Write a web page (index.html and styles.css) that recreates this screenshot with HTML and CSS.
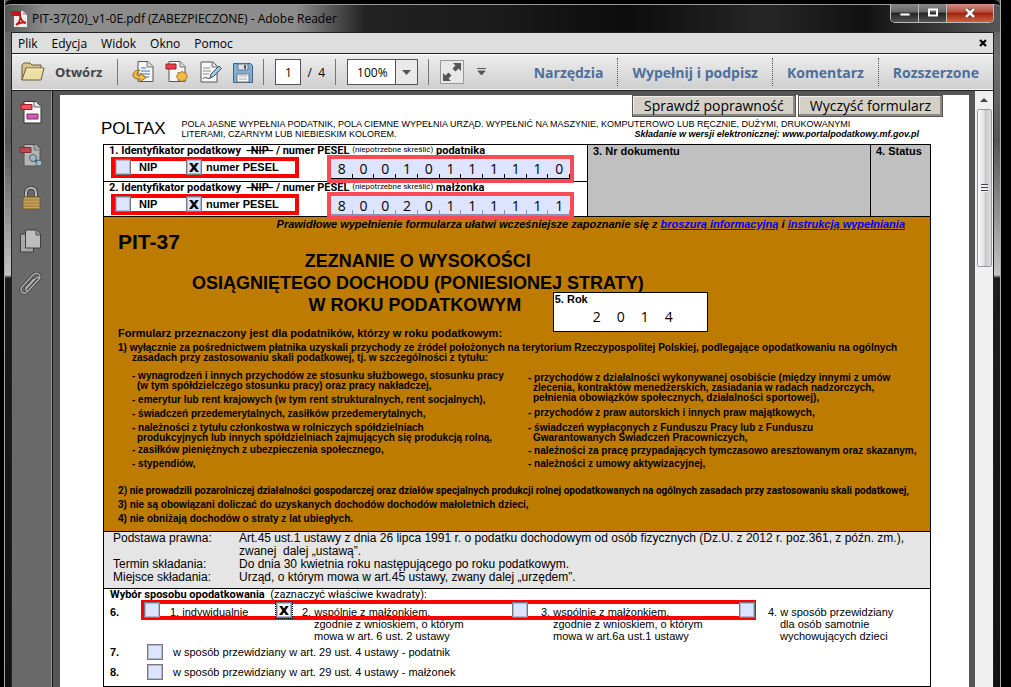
FILE: index.html
```html
<!DOCTYPE html>
<html lang="pl">
<head>
<meta charset="utf-8">
<title>PIT-37(20)_v1-0E.pdf (ZABEZPIECZONE) - Adobe Reader</title>
<link rel="stylesheet" href="styles.css">
</head>
<body>
<div class="window">
  <header class="titlebar">
    <svg class="app-icon" width="16" height="17" viewBox="0 0 16 17"><path d="M3 1h9l4 4v12H3z" fill="#f2eeee"/><path d="M12 1v4h4z" fill="#b9b3b3"/><path d="M0 1h10v5H0z" fill="#c4161c"/><path d="M5 15c3-2 5-6 4-10 0 4 3 7 6 8-3-1-7 0-10 2z" fill="none" stroke="#c4161c" stroke-width="2"/></svg>
    <h1 class="window-title">PIT-37(20)_v1-0E.pdf (ZABEZPIECZONE) - Adobe Reader</h1>
    <div class="caption-buttons">
      <button class="caption" aria-label="Minimalizuj"><svg width="12" height="10" viewBox="0 0 12 10"><path d="M1 5h10v3H1z" fill="#fff" stroke="#444"/></svg></button>
      <button class="caption" aria-label="Maksymalizuj"><svg width="12" height="10" viewBox="0 0 12 10"><path d="M2 1.500h8v6H2z" fill="none" stroke="#fff" stroke-width="2"/></svg></button>
      <button class="caption caption-close" aria-label="Zamknij"><svg width="12" height="10" viewBox="0 0 12 10"><path d="M2 1l8 8M10 1l-8 8" stroke="#4a2a28" stroke-width="4"/><path d="M2 1l8 8M10 1l-8 8" stroke="#fff" stroke-width="2.500"/></svg></button>
    </div>
  </header>

  <div class="client">
    <nav class="menubar">
      <button class="menu">Plik</button>
      <button class="menu">Edycja</button>
      <button class="menu">Widok</button>
      <button class="menu">Okno</button>
      <button class="menu">Pomoc</button>
      <button class="menu-close" aria-label="Zamknij dokument"><svg width="8" height="8" viewBox="0 0 8 8"><path d="M1 1l6 6M7 1L1 7" stroke="#000" stroke-width="2.200"/></svg></button>
    </nav>

    <div class="toolbar">
      <button class="open">
        <svg width="24" height="20" viewBox="0 0 24 20"><path d="M1 18V3l2-2h6l2 2h9v3" fill="#d9c787" stroke="#6b5b35"/><path d="M1 18L5 6h18l-3 12z" fill="#ecdfa8" stroke="#6b5b35"/><path d="M6 7h16" stroke="#f9f3d5"/></svg>
        Otwórz
      </button>
      <span class="sep"></span>
      <div class="icons">
        <button class="tool" aria-label="Konwertuj"><svg width="22" height="22" viewBox="0 0 22 22"><path d="M6 .5h10l5 5v15H6z" fill="#f7f7f7" stroke="#555"/><path d="M15 1v5h6" fill="#ddd" stroke="#777"/><path d="M9 7h5M9 10h9M9 13h9M9 16h8" stroke="#3575b5"/><path d="M8 9c-5 0-7 3-7 5 0 3 3 4 7 4v3l6-4.500-6-4.500v3c-4 0-4-3 0-6z" fill="#f3bd45" stroke="#8f6518"/></svg></button>
        <button class="tool" aria-label="Utwórz PDF"><svg width="24" height="22" viewBox="0 0 24 22"><path d="M4 .5h11l5 5v15H4z" fill="#f7f7f7" stroke="#555"/><path d="M15 1v5h5" fill="#ddd" stroke="#777"/><path d="M1 3h10v5H1z" fill="#ee3e45" stroke="#9b1c20"/><path d="M17 10l1.500 2 2.500-.5v2.500l2 1.500-2 1.500v2.500l-2.500-.5-1.500 2-1.500-2-2.500.5V17l-2-1.500 2-1.500v-2.500l2.500.5z" fill="#f5bd49" stroke="#a87724"/></svg></button>
        <button class="tool" aria-label="Podpisz"><svg width="22" height="22" viewBox="0 0 22 22"><path d="M1 1h12l4 4v16H1z" fill="#f7f7f7" stroke="#555"/><path d="M12 1v5h5" fill="#ddd" stroke="#777"/><path d="M3 7h7M3 10h8M3 13h6" stroke="#888"/><path d="M3 18c2-3 3-1 4-1s1 1 3 0" stroke="#333" fill="none"/><path d="M10 17l1-4 8-8 2.500 2.500-8 8z" fill="#a9c3d8" stroke="#3b5266"/></svg></button>
        <button class="tool" aria-label="Zapisz"><svg width="20" height="21" viewBox="0 0 20 21"><path d="M.5 1.500h17l2 2v17H.5z" fill="#7fb0d3" stroke="#3c6485"/><path d="M5 2h10v6H5z" fill="#e0e4e6" stroke="#678"/><path d="M11 3h2v4h-2z" fill="#555"/><path d="M4 12h12v8H4z" fill="#f5f5f5" stroke="#678"/><path d="M6 14h8M6 17h8" stroke="#aaa"/></svg></button>
      </div>
      <span class="sep"></span>
      <label class="page-nav"><input class="page-input" type="text" value="1" aria-label="Strona"> / &nbsp;4</label>
      <span class="sep"></span>
      <div class="zoom">
        <select class="zoom-select" aria-label="Powiększenie"><option>100%</option></select>
        <span class="zoom-arrow"><svg width="9" height="5" viewBox="0 0 9 5"><path d="M0 0h9L4.500 5z" fill="#555"/></svg></span>
      </div>
      <span class="sep"></span>
      <button class="expand" aria-label="Tryb czytania"><svg width="20" height="20" viewBox="0 0 20 20"><path d="M11 1h8v8l-2.500-2.500-3 3-3-3 3-3zM9 19H1v-8l2.500 2.500 3-3 3 3-3 3z" fill="#555"/></svg></button>
      <button class="more" aria-label="Więcej"><svg width="9" height="8" viewBox="0 0 9 8"><path d="M0 0h9v1H0z" fill="#555"/><path d="M1 3h7L4.500 7z" stroke="#555" fill="#555"/></svg></button>
      <div class="panes">
        <button class="pane">Narzędzia</button>
        <button class="pane">Wypełnij i podpisz</button>
        <button class="pane">Komentarz</button>
        <button class="pane">Rozszerzone</button>
      </div>
    </div>

    <div class="workspace">
      <aside class="sidebar">
        <button class="side-tool" aria-label="Pola formularza"><svg width="24" height="24" viewBox="0 0 24 24"><path d="M5 1.500h12l5 5V23H5z" fill="#fafafa" stroke="#333"/><path d="M15 2v5h6" fill="#ddd" stroke="#666"/><path d="M2 4.500h11v5H2z" fill="#f2525c" stroke="#a01a24"/><path d="M8 14h11v5H8z" fill="#cf5bb2" stroke="#7d2b6c"/></svg></button>
        <button class="side-tool" aria-label="Udostępnij"><svg width="24" height="24" viewBox="0 0 24 24"><path d="M5 1.500h12l4 4V23H5z" fill="#b5b5b5" stroke="#505050"/><path d="M15 2v5h5" fill="#999" stroke="#777"/><path d="M1 4.500h11v5H1z" fill="#b8484d" stroke="#7a3034"/><path d="M14 15l6 6" stroke="#4d626c" stroke-width="3"/><circle cx="14" cy="15" r="3.500" fill="#9db8c6" stroke="#4d626c"/><circle cx="20" cy="20" r="3" fill="#9db8c6" stroke="#4d626c"/></svg></button>
        <button class="side-tool" aria-label="Zabezpieczenia"><svg width="20" height="24" viewBox="0 0 20 24"><path d="M5 12V7c0-7 10-7 10 0v5" fill="none" stroke="#444" stroke-width="4"/><path d="M5 12V7c0-7 10-7 10 0v5" fill="none" stroke="#bbb" stroke-width="2"/><path d="M2 11h17v12H2z" fill="#c9a35b" stroke="#735625"/><path d="M3 14h15M3 17h15M3 20h15" stroke="#94743a"/></svg></button>
        <button class="side-tool" aria-label="Strony"><svg width="24" height="24" viewBox="0 0 24 24"><path d="M1.500 5h13v18h-13z" fill="#a8a8a8" stroke="#3f3f3f"/><path d="M6.500 1h11l4 4v14h-15z" fill="#bdbdbd" stroke="#3f3f3f"/><path d="M17 1v5h4" fill="#999" stroke="#555"/></svg></button>
        <button class="side-tool" aria-label="Załączniki"><svg width="24" height="24" viewBox="0 0 24 24"><path d="M7 17l10-11c2-2 4 0 2 2L8 20c-3 3-8-1-5-5L14 3c4-4 9 0 6 4L10 18c-2 2-4 0-3-2l8-9" fill="none" stroke="#404040" stroke-width="3"/><path d="M7 17l10-11c2-2 4 0 2 2L8 20c-3 3-8-1-5-5L14 3c4-4 9 0 6 4L10 18c-2 2-4 0-3-2l8-9" fill="none" stroke="#b0b0b0" stroke-width="1.400"/></svg></button>
      </aside>

      <main class="page">
        <div class="page-actions">
          <button class="action">Sprawdź poprawność</button>
          <button class="action">Wyczyść formularz</button>
        </div>
        <div class="page-head">
          <strong class="poltax">POLTAX</strong>
          <div class="notes">
            <p>POLA JASNE WYPEŁNIA PODATNIK, POLA CIEMNE WYPEŁNIA URZĄD. WYPEŁNIĆ NA MASZYNIE, KOMPUTEROWO LUB RĘCZNIE, DUŻYMI, DRUKOWANYMI</p>
            <p class="notes-last"><span>LITERAMI, CZARNYM LUB NIEBIESKIM KOLOREM.</span> <em>Składanie w wersji elektronicznej: www.portalpodatkowy.mf.gov.pl</em></p>
          </div>
        </div>

        <form class="form">
          <section class="ids">
            <div class="id-rows">
              <div class="id-row">
                <p class="id-title">1. Identyfikator podatkowy &nbsp;<s>-NIP-</s> / numer PESEL <small>(niepotrzebne skreślić)</small> podatnika</p>
                <div class="id-fields">
                  <div class="choice">
                    <label class="choice-nip"><input class="check" type="checkbox"> NIP</label>
                    <label class="choice-pesel"><input class="check" type="checkbox" checked> numer PESEL</label>
                  </div>
                  <div class="comb">
                    <input class="digit" value="8" aria-label="Cyfra 1"><input class="digit" value="0" aria-label="Cyfra 2"><input class="digit" value="0" aria-label="Cyfra 3"><input class="digit" value="1" aria-label="Cyfra 4"><input class="digit" value="0" aria-label="Cyfra 5"><input class="digit" value="1" aria-label="Cyfra 6"><input class="digit" value="1" aria-label="Cyfra 7"><input class="digit" value="1" aria-label="Cyfra 8"><input class="digit" value="1" aria-label="Cyfra 9"><input class="digit" value="1" aria-label="Cyfra 10"><input class="digit" value="0" aria-label="Cyfra 11">
                  </div>
                </div>
              </div>
              <div class="id-row id-spouse">
                <p class="id-title">2. Identyfikator podatkowy &nbsp;<s>-NIP-</s> / numer PESEL <small>(niepotrzebne skreślić)</small> małżonka</p>
                <div class="id-fields">
                  <div class="choice">
                    <label class="choice-nip"><input class="check" type="checkbox"> NIP</label>
                    <label class="choice-pesel"><input class="check" type="checkbox" checked> numer PESEL</label>
                  </div>
                  <div class="comb">
                    <input class="digit" value="8" aria-label="Cyfra 1"><input class="digit" value="0" aria-label="Cyfra 2"><input class="digit" value="0" aria-label="Cyfra 3"><input class="digit" value="2" aria-label="Cyfra 4"><input class="digit" value="0" aria-label="Cyfra 5"><input class="digit" value="1" aria-label="Cyfra 6"><input class="digit" value="1" aria-label="Cyfra 7"><input class="digit" value="1" aria-label="Cyfra 8"><input class="digit" value="1" aria-label="Cyfra 9"><input class="digit" value="1" aria-label="Cyfra 10"><input class="digit" value="1" aria-label="Cyfra 11">
                  </div>
                </div>
              </div>
            </div>
            <div class="office">3. Nr dokumentu</div>
            <div class="office office-status">4. Status</div>
          </section>

          <section class="intro">
            <p class="hint">Prawidłowe wypełnienie formularza ułatwi wcześniejsze zapoznanie się z <a href="#">broszurą informacyjną</a> i <a href="#">instrukcją wypełniania</a></p>
            <h2 class="code">PIT-37</h2>
            <div class="heading">
              <h3 class="title">ZEZNANIE O WYSOKOŚCI<br>OSIĄGNIĘTEGO DOCHODU (PONIESIONEJ STRATY)<br><span class="title-end">W ROKU PODATKOWYM</span></h3>
              <label class="year">5. Rok
                <span class="year-digits"><input class="year-digit" value="2" aria-label="Rok 1"><input class="year-digit" value="0" aria-label="Rok 2"><input class="year-digit" value="1" aria-label="Rok 3"><input class="year-digit" value="4" aria-label="Rok 4"></span>
              </label>
            </div>
            <p class="lead">Formularz przeznaczony jest dla podatników, którzy w roku podatkowym:</p>
            <p class="point">1) wyłącznie za pośrednictwem płatnika uzyskali przychody ze źródeł położonych na terytorium Rzeczypospolitej Polskiej, podlegające opodatkowaniu na ogólnych<br>zasadach przy zastosowaniu skali podatkowej, tj. w szczególności z tytułu:</p>
            <div class="sources">
              <ul class="list">
                <li>- wynagrodzeń i innych przychodów ze stosunku służbowego, stosunku pracy<br>(w tym spółdzielczego stosunku pracy) oraz pracy nakładczej,</li>
                <li>- emerytur lub rent krajowych (w tym rent strukturalnych, rent socjalnych),</li>
                <li>- świadczeń przedemerytalnych, zasiłków przedemerytalnych,</li>
                <li>- należności z tytułu członkostwa w rolniczych spółdzielniach<br>produkcyjnych lub innych spółdzielniach zajmujących się produkcją rolną,</li>
                <li class="tight">- zasiłków pieniężnych z ubezpieczenia społecznego,</li>
                <li>- stypendiów,</li>
              </ul>
              <ul class="list list-right">
                <li>- przychodów z działalności wykonywanej osobiście (między innymi z umów<br>zlecenia, kontraktów menedżerskich, zasiadania w radach nadzorczych,<br>pełnienia obowiązków społecznych, działalności sportowej),</li>
                <li>- przychodów z praw autorskich i innych praw majątkowych,</li>
                <li>- świadczeń wypłacọnych z Funduszu Pracy lub z Funduszu<br>Gwarantowanych Świadczeń Pracowniczych,</li>
                <li class="tight">- należności za pracę przypadających tymczasowo aresztowanym oraz skazanym,</li>
                <li class="tight">- należności z umowy aktywizacyjnej,</li>
              </ul>
            </div>
            <p class="rule rule-long">2) nie prowadzili pozarolniczej działalności gospodarczej oraz działów specjalnych produkcji rolnej opodatkowanych na ogólnych zasadach przy zastosowaniu skali podatkowej,</p>
            <p class="rule">3) nie są obowiązani doliczać do uzyskanych dochodów dochodów małoletnich dzieci,</p>
            <p class="rule">4) nie obniżają dochodów o straty z lat ubiegłych.</p>
          </section>

          <dl class="legal">
            <dt>Podstawa prawna:</dt>
            <dd>Art.45 ust.1 ustawy z dnia 26 lipca 1991 r. o podatku dochodowym od osób fizycznych (Dz.U. z 2012 r. poz.361, z późn. zm.),<br>zwanej &nbsp;dalej „ustawą”.</dd>
            <dt>Termin składania:</dt>
            <dd>Do dnia 30 kwietnia roku następującego po roku podatkowym.</dd>
            <dt>Miejsce składania:</dt>
            <dd>Urząd, o którym mowa w art.45 ustawy, zwany dalej „urzędem”.</dd>
          </dl>

          <section class="method">
            <p class="method-title"><b>Wybór sposobu opodatkowania</b> &nbsp;(zaznaczyć właściwe kwadraty):</p>
            <div class="options">
              <b>6.</b>
              <label class="option"><input class="check" type="checkbox"><span>1. indywidualnie</span></label>
              <label class="option"><input class="check check-focus" type="checkbox" checked><span class="hang">2. wspólnie z małżonkiem,<br>zgodnie z wnioskiem, o którym<br>mowa w art. 6 ust. 2 ustawy</span></label>
              <label class="option option-wide"><input class="check" type="checkbox"><span class="hang">3. wspólnie z małżonkiem,<br>zgodnie z wnioskiem, o którym<br>mowa w art.6a ust.1 ustawy</span></label>
              <label class="option option-wide"><input class="check" type="checkbox"><span class="hang">4. w sposób przewidziany<br>dla osób samotnie<br>wychowujących dzieci</span></label>
              <div class="marker"></div>
            </div>
            <div class="single"><b>7.</b><label class="option"><input class="check" type="checkbox"><span>w sposób przewidziany w art. 29 ust. 4 ustawy - podatnik</span></label></div>
            <div class="single"><b>8.</b><label class="option"><input class="check" type="checkbox"><span>w sposób przewidziany w art. 29 ust. 4 ustawy - małżonek</span></label></div>
          </section>
          <section class="next"></section>
        </form>
      </main>

      <div class="scrollbar">
        <svg class="scroll-up" width="8" height="5" viewBox="0 0 8 5"><path d="M0 5l4-4 4 4z" fill="#444"/></svg>
        <div class="thumb"><span class="grip"></span></div>
      </div>
    </div>
  </div>
</div>
</body>
</html>
```
FILE: styles.css
```css
* { box-sizing: border-box; }

body {
  margin: 0;
  height: 100vh;
  overflow: hidden;
  background: #000;
  font-family: "Liberation Sans", Arial, sans-serif;
}

p, h1, h2, h3, ul, dl, dd { margin: 0; padding: 0; }

button, input, select {
  font: inherit;
  color: inherit;
  padding: 0;
  border: 0;
  background: none;
}

svg { display: block; }

.window {
  display: flex;
  flex-direction: column;
  height: 100vh;
  margin: 0 10px 0 4px;
  padding: 0 6px;
  border: 1px solid #aaa;
  border-top: 0;
  border-bottom: 0;
  background: linear-gradient(#5a5a5a 0, #707070 60px, #555 140px, #c4c4c4 275px, #1c1c1c 278px, #111 100%);
}

/* Title bar */
.titlebar {
  display: flex;
  align-items: center;
  height: 32px;
  margin: 0 -6px;
  padding: 2px 6px 2px;
  border-top: 4px solid #000;
  border-radius: 6px 6px 0 0;
  background: linear-gradient(90deg, #555 0, #8c8c8c 40px, #8c8c8c 290px, #222 360px, #1a1a1a 500px, #0c0c0c 620px, #262626 760px, #111 860px, #555 990px);
  box-shadow: inset 0 1px #999;
}

.app-icon { margin-right: 5px; }

.window-title {
  flex: 1;
  font: 12px "Open Sans", sans-serif;
  color: #000;
}

.caption-buttons {
  display: flex;
  align-self: flex-start;
  margin-top: -2px;
  border: 1px solid #bbb;
  border-top: 0;
  border-radius: 0 0 5px 5px;
  overflow: hidden;
}

.caption {
  display: flex;
  justify-content: center;
  align-items: center;
  width: 28px;
  height: 18px;
  border-right: 1px solid #bbb;
  background: linear-gradient(#8a8a8a, #666 45%, #222 50%, #555);
}

.caption-close {
  width: 46px;
  border: 0;
  background: linear-gradient(#d09084, #b8503f 45%, #a02010 50%, #d06040);
}

.client {
  flex: 1;
  display: flex;
  flex-direction: column;
  min-height: 0;
  border: 1px solid #222;
  border-bottom: 0;
}

/* Menu */
.menubar {
  display: flex;
  align-items: center;
  gap: 14px;
  height: 20px;
  padding: 0 6px;
  background: #dedede;
  font: 12px "Open Sans", sans-serif;
  color: #000;
}

.menu-close { margin-left: auto; }

/* Toolbar */
.toolbar {
  display: flex;
  align-items: center;
  height: 38px;
  padding: 0 0 0 9px;
  border-top: 1px solid #222;
  border-bottom: 1px solid #222;
  background: linear-gradient(#fff 0, #ececec 2px, #cecece 100%);
  box-shadow: inset 0 -1px #f5f5f5;
  font-family: "Open Sans", sans-serif;
}

.open {
  display: flex;
  align-items: center;
  gap: 10px;
  font-size: 13px;
  font-weight: 700;
  color: #444;
}

.sep {
  width: 1px;
  height: 26px;
  margin: 0 11px 0 10px;
  background: #777;
}

.open + .sep { margin: 0 14px 0 15px; }

.icons {
  display: flex;
  align-items: center;
  gap: 11px;
}

.page-nav {
  display: flex;
  align-items: center;
  gap: 3px;
  font-size: 12px;
  color: #000;
  white-space: pre;
}

.page-input {
  width: 26px;
  height: 26px;
  border: 1px solid #555;
  background: #fff;
  text-align: center;
}

.zoom {
  display: flex;
  width: 71px;
  height: 26px;
  border: 1px solid #555;
  background: #fff;
}

.zoom-select {
  flex: 1;
  appearance: none;
  padding-left: 9px;
  font-size: 12px;
  color: #000;
}

.zoom-arrow {
  display: grid;
  place-items: center;
  width: 22px;
  border-left: 1px solid #555;
  background: #e9e9e9;
}

.expand {
  display: grid;
  place-items: center;
  width: 24px;
  height: 24px;
  border: 1px solid #999;
  background: #e8e8e8;
}

.more { margin-left: 13px; }

.panes {
  display: flex;
  margin-left: auto;
}

.pane {
  height: 28px;
  padding: 0 14px;
  border-left: 1px dotted #555;
  font-size: 14px;
  font-weight: 700;
  color: #4d6f9c;
}

.pane:first-child { border-left: 0; }

/* Workspace */
.workspace {
  flex: 1;
  display: flex;
  min-height: 0;
  background: #555;
}

.sidebar {
  display: flex;
  flex-direction: column;
  align-items: center;
  gap: 19px;
  width: 41px;
  padding: 9px 2px 0 0;
  border-right: 1px solid #111;
  background: #696969;
  box-shadow: inset -1px 0 #999;
}

.page {
  flex: 1;
  min-width: 0;
  margin: 4px 6px 0 7px;
  padding: 0 38px 0 43px;
  background: #fff;
  color: #000;
  overflow: hidden;
}

.page-actions {
  display: flex;
  justify-content: flex-end;
  gap: 2px;
  margin-right: -12px;
}

.action {
  height: 22px;
  padding: 0 11px;
  border: 1px solid #555;
  background: #d4d0c8;
  box-shadow: inset -2px -2px #8c8882, inset 1px 1px #eee;
  font: 14px/18px "Open Sans", sans-serif;
  white-space: nowrap;
}

.page-head {
  display: flex;
  align-items: center;
  gap: 16px;
  margin: 2px 12px 5px -2px;
}

.poltax {
  font-size: 17px;
  font-weight: 400;
}

.notes {
  flex: 1;
  font-size: 9px;
  line-height: 10px;
  white-space: nowrap;
}

.notes-last {
  display: flex;
  justify-content: space-between;
}

.notes em { font-weight: 700; }

.form {
  border: 1px solid #000;
  border-bottom: 0;
}

/* Identifiers */
.ids {
  display: grid;
  grid-template-columns: 483px 1fr 60px;
  border-bottom: 1px solid #000;
}

.id-row { padding: 0 7px 3px; }

.id-spouse {
  padding-bottom: 1px;
  border-top: 1px solid #000;
}

.id-title {
  margin-left: -2px;
  font: 700 11px/11px Roboto, sans-serif;
  white-space: nowrap;
}

.id-title small {
  font-size: 8px;
  font-weight: 400;
  line-height: 8px;
  vertical-align: 2px;
}

.id-fields {
  display: flex;
  align-items: flex-start;
  gap: 28px;
}

.choice {
  display: flex;
  width: 188px;
  height: 21px;
  margin-top: 1px;
  border: 4px solid #f00;
  font-size: 11px;
  line-height: 12px;
  font-weight: 700;
}

.choice label {
  display: flex;
  align-items: center;
  margin: -3px 0 -2px;
}

.choice-nip {
  width: 71px;
  gap: 8px;
}

.choice-pesel { gap: 4px; }

.check {
  flex: none;
  appearance: none;
  display: grid;
  place-items: center;
  width: 16px;
  height: 16px;
  margin: 0;
  border: 1px solid #77777f;
  background: #dde4ff;
  box-shadow: inset 1px 1px #b4b8cc, inset -1px -1px #b4b8cc;
}

.check:checked::before {
  content: "x";
  font: 700 16px/10px "DejaVu Sans", sans-serif;
  color: #000;
}

.comb {
  display: flex;
  width: 247px;
  height: 28px;
  position: relative;
  margin: -1px 0 -7px;
  border: 4px solid #fb4a56;
  background: #dde4ff;
}

.digit {
  flex: 1;
  min-width: 0;
  text-align: center;
  border-bottom: 1px solid #000;
  font: 14px "Open Sans", sans-serif;
  background: linear-gradient(#000, #000) right bottom / 1px 4px no-repeat;
}

.id-spouse .digit {
  border-bottom: 2px solid #8890b4;
  background: linear-gradient(#8890b4, #8890b4) right bottom / 1px 4px no-repeat;
}

.office {
  padding: 0 5px;
  border-left: 1px solid #000;
  background: #c0c0c0;
  font-size: 11px;
  font-weight: 700;
}

/* Introduction */
.intro {
  padding: 1px 0 3px 14px;
  border-bottom: 1px solid #000;
  background: #bd7b00;
  font-size: 10px;
  font-weight: 700;
  line-height: 10px;
  white-space: nowrap;
}

.hint {
  padding-right: 25px;
  font-size: 11px;
  font-style: italic;
  line-height: 12px;
  text-align: right;
}

.hint a { color: #00f; }

.code {
  font-size: 21px;
  line-height: 24px;
}

.heading {
  display: flex;
  align-items: flex-end;
  height: 78px;
  margin-top: -4px;
}

.title {
  margin: 0 -91px 12px 74px;
  font-size: 18px;
  line-height: 22px;
  text-align: center;
}

.title-end { padding-right: 6px; }

.year {
  width: 155px;
  height: 40px;
  margin-bottom: -4px;
  border: 1px solid #000;
  padding: 0 1px;
  background: #fff;
  font-size: 11px;
  line-height: 12px;
}

.year-digits {
  display: flex;
  padding-left: 30px;
}

.year-digit {
  width: 24px;
  text-align: center;
  font: 14px/24px "Open Sans", sans-serif;
}

.lead {
  margin-bottom: 5px;
  font-size: 11px;
}

.point {
  margin-bottom: 8px;
  padding-left: 14px;
  text-indent: -14px;
}

.sources {
  display: grid;
  grid-template-columns: 396px 1fr;
  padding-left: 14px;
  margin-bottom: 17px;
}

.list {
  display: flex;
  flex-direction: column;
  gap: 4px;
  list-style: none;
}

.list li {
  padding-left: 5px;
  text-indent: -5px;
}

.list-right {
  gap: 5px;
  padding-top: 2px;
}

.list .tight { margin-top: -2px; }

.rule { margin-bottom: 4px; }

.rule-long { font-family: Roboto, sans-serif; }

/* Legal basis */
.legal {
  display: grid;
  grid-template-columns: 126px 1fr;
  padding: 0 0 4px 9px;
  border-bottom: 1px solid #000;
  background: #e5e5e5;
  font-size: 12px;
  line-height: 13px;
  white-space: nowrap;
}

/* Taxation method */
.method {
  padding: 0 6px 2px;
  border-bottom: 1px solid #000;
  font-size: 11px;
  line-height: 12px;
}

.method-title { font-family: Roboto, sans-serif; }

.options {
  position: relative;
  display: grid;
  grid-template-columns: 34px 132px 236px 227px 1fr;
  margin-bottom: 2px;
}

.options b, .options span { padding-top: 5px; }

.options .check {
  position: relative;
  z-index: 1;
  margin-top: 1px;
}

.option {
  display: flex;
  align-items: flex-start;
  gap: 10px;
  white-space: nowrap;
}

.option-wide { gap: 13px; }

.hang {
  padding-left: 12px;
  text-indent: -12px;
}

.check-focus {
  background: #fff;
  outline: 1px dotted #000;
}

.marker {
  position: absolute;
  left: 31px;
  top: -1px;
  width: 615px;
  height: 20px;
  border: 4px solid #f00;
}

.single {
  display: flex;
  align-items: center;
  margin-bottom: 4px;
}

.single b { width: 37px; }

.single .option { align-items: center; }

.next {
  height: 40px;
  background: #e5e5e5;
}

/* Scrollbar */
.scrollbar {
  display: flex;
  flex-direction: column;
  align-items: center;
  width: 18px;
  background: #f0f0f0;
}

.scroll-up { margin: 6px 0 7px; }

.thumb {
  display: grid;
  place-items: center;
  width: 15px;
  height: 158px;
  border: 1px solid #999;
  border-radius: 2px;
  background: linear-gradient(90deg, #f8f8f8, #e4e4e4 45%, #c8c8cc 55%, #dcdcdc);
}

.grip {
  width: 7px;
  height: 8px;
  background: repeating-linear-gradient(#444 0 1px, #eee 1px 3px);
}
```
